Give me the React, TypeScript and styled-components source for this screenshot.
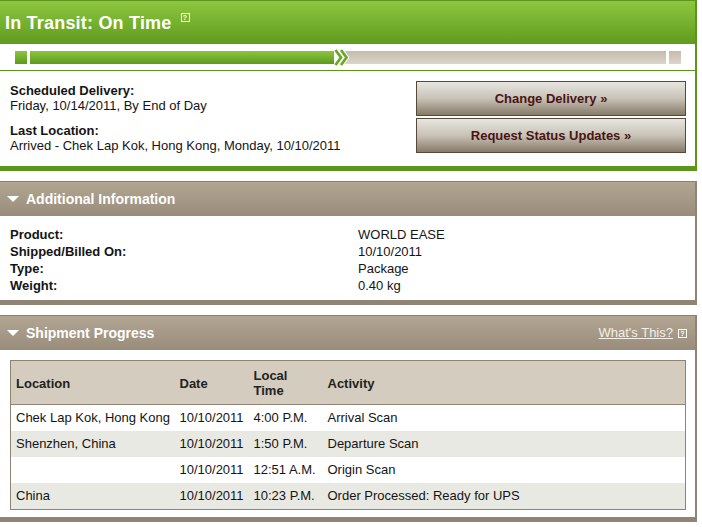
import React from 'react';
import styled, { createGlobalStyle } from 'styled-components';

const GlobalStyle = createGlobalStyle`
  body {
    margin: 0;
    background: #fff;
    font-family: "Liberation Sans", Arial, sans-serif;
    font-size: 13px;
    color: #141414;
  }
`;

const Page = styled.div`
  width: 697px;
  display: flex;
  flex-direction: column;
  gap: 10px;
`;

/* ---------- status card ---------- */

const StatusCard = styled.div`
  border-top: 1px solid #5b961b;
  border-right: 2px solid #5b961b;
  border-bottom: 5px solid #5b961b;
`;

const StatusHeader = styled.div`
  height: 43px;
  display: flex;
  align-items: center;
  gap: 9px;
  padding-left: 5px;
  background: linear-gradient(#8dc740, #5f9b1d);
`;

const StatusTitle = styled.h1`
  margin: 0;
  font-size: 18px;
  line-height: 20px;
  font-weight: bold;
  color: #fff;
  letter-spacing: 0.2px;
`;

const HelpIcon = styled.span<{ $raise?: number }>`
  width: 7px;
  height: 7px;
  border: 1px solid #fff;
  color: #fff;
  font-size: 7px;
  line-height: 7px;
  font-weight: bold;
  text-align: center;
  align-self: flex-start;
  margin-top: ${p => p.$raise ?? 0}px;
`;

const ProgressRow = styled.div`
  display: flex;
  align-items: center;
  height: 13px;
  padding: 7px 14px 6px 15px;
  border-bottom: 1px solid #5b961b;
`;

const Segment = styled.div<{ $done?: boolean; $w?: number }>`
  height: 13px;
  flex: ${p => (p.$w ? `0 0 ${p.$w}px` : '1 1 auto')};
  background: ${p =>
    p.$done ? 'linear-gradient(#8cc53f, #5d991c)' : 'linear-gradient(#c5bbad, #dbd5cb)'};
`;

const SegGap = styled.div`
  flex: 0 0 3px;
`;

const ChevronBox = styled.svg`
  flex: 0 0 15px;
  height: 19px;
  margin-right: -5px;
  position: relative;
  z-index: 1;
`;

const InfoRow = styled.div`
  display: flex;
  justify-content: space-between;
  padding: 10px 9px 13px 10px;
`;

const InfoBlock = styled.div`
  display: flex;
  flex-direction: column;
  gap: 10px;
  padding-top: 2px;
  line-height: 15px;
`;

const InfoLabel = styled.div`
  font-weight: bold;
`;

const ButtonStack = styled.div`
  width: 270px;
  display: flex;
  flex-direction: column;
  gap: 2px;
`;

const ActionButton = styled.button`
  height: 35px;
  border: 1px solid #5a4836;
  background: linear-gradient(#e7e6e0, #c8c2b7 50%, #877a68);
  font-family: "Liberation Sans", Arial, sans-serif;
  font-size: 13px;
  font-weight: bold;
  color: #4a1414;
  cursor: pointer;
`;

/* ---------- sections ---------- */

const Section = styled.div`
  border-right: 2px solid #908575;
  border-bottom: 5px solid #908575;
`;

const SectionHeader = styled.div`
  height: 34px;
  border-top: 1px solid #8a7e6e;
  display: flex;
  align-items: center;
  padding: 0 8px 0 7px;
  background: linear-gradient(#b2a693, #998c7b);
`;

const Triangle = styled.span`
  width: 0;
  height: 0;
  border-left: 6px solid transparent;
  border-right: 6px solid transparent;
  border-top: 6px solid #fff;
  margin-right: 7px;
`;

const SectionTitle = styled.h2`
  margin: 0;
  font-size: 14px;
  font-weight: bold;
  color: #fff;
  flex: 1;
`;

const WhatsThis = styled.a`
  color: #f4f0e8;
  text-decoration: underline;
  font-size: 13px;
  margin-right: 5px;
  margin-top: -2px;
`;

const InfoGrid = styled.div`
  display: grid;
  grid-template-columns: 348px 1fr;
  line-height: 17px;
  padding: 10px 0 6px 10px;
`;

const GridLabel = styled.div`
  font-weight: bold;
`;

const TableWrap = styled.div`
  padding: 10px 9px 7px 10px;
`;

const Table = styled.table`
  width: 100%;
  border-collapse: collapse;
  table-layout: fixed;
  border: 1px solid #8f8474;
`;

const HeadCell = styled.th`
  background: #d4ccbe;
  border-bottom: 1px solid #8f8474;
  text-align: left;
  font-weight: bold;
  color: #222;
  padding: 7px 5px 6px 5px;
  line-height: 15px;
  vertical-align: middle;
`;

const Row = styled.tr<{ $alt: boolean }>`
  background: ${p => (p.$alt ? '#e9e9e4' : '#fff')};
`;

const Cell = styled.td`
  padding: 5px 5px;
  line-height: 16px;
  white-space: nowrap;
`;

const progress = [
  { loc: 'Chek Lap Kok, Hong Kong', date: '10/10/2011', time: '4:00 P.M.', act: 'Arrival Scan' },
  { loc: 'Shenzhen, China', date: '10/10/2011', time: '1:50 P.M.', act: 'Departure Scan' },
  { loc: '', date: '10/10/2011', time: '12:51 A.M.', act: 'Origin Scan' },
  { loc: 'China', date: '10/10/2011', time: '10:23 P.M.', act: 'Order Processed: Ready for UPS' },
];

const details = [
  ['Product:', 'WORLD EASE'],
  ['Shipped/Billed On:', '10/10/2011'],
  ['Type:', 'Package'],
  ['Weight:', '0.40 kg'],
];

function Chevron() {
  return (
    <ChevronBox viewBox="0 0 15 19">
      <polyline points="1.5,2 7,9.5 1.5,17" fill="none" stroke="#fff" strokeWidth="5" />
      <polyline points="7,2 12.5,9.5 7,17" fill="none" stroke="#fff" strokeWidth="5" />
      <polyline points="1.5,2 7,9.5 1.5,17" fill="none" stroke="#6aa826" strokeWidth="2.8" />
      <polyline points="7,2 12.5,9.5 7,17" fill="none" stroke="#6aa826" strokeWidth="2.8" />
    </ChevronBox>
  );
}

export default function App() {
  return (
    <>
      <GlobalStyle />
      <Page>
        <StatusCard>
          <StatusHeader>
            <StatusTitle>In Transit: On Time</StatusTitle>
            <HelpIcon $raise={12}>?</HelpIcon>
          </StatusHeader>
          <ProgressRow>
            <Segment $done $w={12} />
            <SegGap />
            <Segment $done $w={304} />
            <Chevron />
            <Segment />
            <SegGap />
            <Segment $w={12} />
          </ProgressRow>
          <InfoRow>
            <InfoBlock>
              <div>
                <InfoLabel>Scheduled Delivery:</InfoLabel>
                <div>Friday, 10/14/2011, By End of Day</div>
              </div>
              <div>
                <InfoLabel>Last Location:</InfoLabel>
                <div>Arrived - Chek Lap Kok, Hong Kong, Monday, 10/10/2011</div>
              </div>
            </InfoBlock>
            <ButtonStack>
              <ActionButton>Change Delivery »</ActionButton>
              <ActionButton>Request Status Updates »</ActionButton>
            </ButtonStack>
          </InfoRow>
        </StatusCard>

        <Section>
          <SectionHeader>
            <Triangle />
            <SectionTitle>Additional Information</SectionTitle>
          </SectionHeader>
          <InfoGrid>
            {details.map(([label, value]) => (
              <React.Fragment key={label}>
                <GridLabel>{label}</GridLabel>
                <div>{value}</div>
              </React.Fragment>
            ))}
          </InfoGrid>
        </Section>

        <Section>
          <SectionHeader>
            <Triangle />
            <SectionTitle>Shipment Progress</SectionTitle>
            <WhatsThis href="#">What's This?</WhatsThis>
            <HelpIcon $raise={13}>?</HelpIcon>
          </SectionHeader>
          <TableWrap>
            <Table>
              <colgroup>
                <col style={{ width: 164 }} />
                <col style={{ width: 74 }} />
                <col style={{ width: 74 }} />
                <col />
              </colgroup>
              <thead>
                <tr>
                  <HeadCell>Location</HeadCell>
                  <HeadCell>Date</HeadCell>
                  <HeadCell>Local Time</HeadCell>
                  <HeadCell>Activity</HeadCell>
                </tr>
              </thead>
              <tbody>
                {progress.map((p, i) => (
                  <Row key={i} $alt={i % 2 === 1}>
                    <Cell>{p.loc}</Cell>
                    <Cell>{p.date}</Cell>
                    <Cell>{p.time}</Cell>
                    <Cell>{p.act}</Cell>
                  </Row>
                ))}
              </tbody>
            </Table>
          </TableWrap>
        </Section>
      </Page>
    </>
  );
}
